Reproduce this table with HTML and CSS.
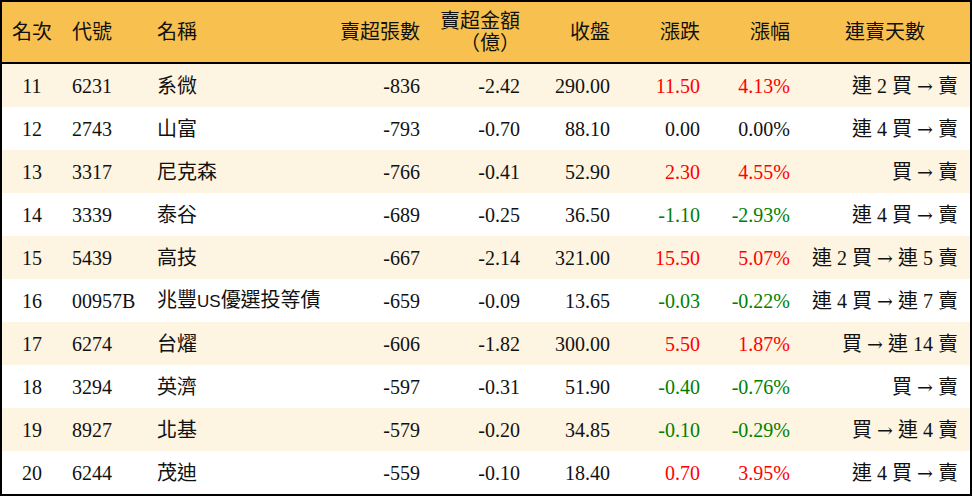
FILE: index.html
```html
<!DOCTYPE html>
<html lang="zh-Hant">
<head>
<meta charset="utf-8">
<title>賣超排行</title>
<link rel="stylesheet" href="styles.css">
</head>
<body>
<div class="board">
  <div class="row head">
    <div class="c c1">名次</div>
    <div class="c c2">代號</div>
    <div class="c c3">名稱</div>
    <div class="c num">賣超張數</div>
    <div class="c num two">賣超金額<br>（億）</div>
    <div class="c num">收盤</div>
    <div class="c num">漲跌</div>
    <div class="c num">漲幅</div>
    <div class="c c9h">連賣天數</div>
  </div>
  <div class="row odd">
    <div class="c c1">11</div><div class="c c2">6231</div><div class="c c3">系微</div>
    <div class="c num">-836</div><div class="c num">-2.42</div><div class="c num">290.00</div>
    <div class="c num up">11.50</div><div class="c num up">4.13%</div><div class="c num">連 2 買 <span class="arr">→</span> 賣</div>
  </div>
  <div class="row">
    <div class="c c1">12</div><div class="c c2">2743</div><div class="c c3">山富</div>
    <div class="c num">-793</div><div class="c num">-0.70</div><div class="c num">88.10</div>
    <div class="c num">0.00</div><div class="c num">0.00%</div><div class="c num">連 4 買 <span class="arr">→</span> 賣</div>
  </div>
  <div class="row odd">
    <div class="c c1">13</div><div class="c c2">3317</div><div class="c c3">尼克森</div>
    <div class="c num">-766</div><div class="c num">-0.41</div><div class="c num">52.90</div>
    <div class="c num up">2.30</div><div class="c num up">4.55%</div><div class="c num">買 <span class="arr">→</span> 賣</div>
  </div>
  <div class="row">
    <div class="c c1">14</div><div class="c c2">3339</div><div class="c c3">泰谷</div>
    <div class="c num">-689</div><div class="c num">-0.25</div><div class="c num">36.50</div>
    <div class="c num down">-1.10</div><div class="c num down">-2.93%</div><div class="c num">連 4 買 <span class="arr">→</span> 賣</div>
  </div>
  <div class="row odd">
    <div class="c c1">15</div><div class="c c2">5439</div><div class="c c3">高技</div>
    <div class="c num">-667</div><div class="c num">-2.14</div><div class="c num">321.00</div>
    <div class="c num up">15.50</div><div class="c num up">5.07%</div><div class="c num">連 2 買 <span class="arr">→</span> 連 5 賣</div>
  </div>
  <div class="row">
    <div class="c c1">16</div><div class="c c2">00957B</div><div class="c c3">兆豐<span class="sans">US</span>優選投等債</div>
    <div class="c num">-659</div><div class="c num">-0.09</div><div class="c num">13.65</div>
    <div class="c num down">-0.03</div><div class="c num down">-0.22%</div><div class="c num">連 4 買 <span class="arr">→</span> 連 7 賣</div>
  </div>
  <div class="row odd">
    <div class="c c1">17</div><div class="c c2">6274</div><div class="c c3">台燿</div>
    <div class="c num">-606</div><div class="c num">-1.82</div><div class="c num">300.00</div>
    <div class="c num up">5.50</div><div class="c num up">1.87%</div><div class="c num">買 <span class="arr">→</span> 連 14 賣</div>
  </div>
  <div class="row">
    <div class="c c1">18</div><div class="c c2">3294</div><div class="c c3">英濟</div>
    <div class="c num">-597</div><div class="c num">-0.31</div><div class="c num">51.90</div>
    <div class="c num down">-0.40</div><div class="c num down">-0.76%</div><div class="c num">買 <span class="arr">→</span> 賣</div>
  </div>
  <div class="row odd">
    <div class="c c1">19</div><div class="c c2">8927</div><div class="c c3">北基</div>
    <div class="c num">-579</div><div class="c num">-0.20</div><div class="c num">34.85</div>
    <div class="c num down">-0.10</div><div class="c num down">-0.29%</div><div class="c num">買 <span class="arr">→</span> 連 4 賣</div>
  </div>
  <div class="row">
    <div class="c c1">20</div><div class="c c2">6244</div><div class="c c3">茂迪</div>
    <div class="c num">-559</div><div class="c num">-0.10</div><div class="c num">18.40</div>
    <div class="c num up">0.70</div><div class="c num up">3.95%</div><div class="c num">連 4 買 <span class="arr">→</span> 賣</div>
  </div>
</div>
</body>
</html>
```
FILE: styles.css
```css
html, body {
  margin: 0;
  padding: 0;
  background: #ffffff;
}
.board {
  width: 972px;
  height: 496px;
  box-sizing: border-box;
  border: 2px solid #000000;
  font-family: "Liberation Serif", "Noto Sans CJK TC", serif;
  font-size: 20px;
  color: #111111;
  background: #ffffff;
}
.row {
  display: grid;
  grid-template-columns: 60px 85px 183px 100px 100px 90px 90px 90px 170px;
  height: 43px;
  align-items: center;
}
.row.odd {
  background: #fdf4e1;
}
.row.head {
  height: 60px;
  border-bottom: 2px solid #000000;
  background: #f8c14f;
}
.c {
  white-space: nowrap;
  line-height: 22px;
}
.c1 {
  text-align: center;
}
.c2, .c3 {
  padding-left: 10px;
}
.num {
  text-align: right;
  padding-right: 10px;
}
.row .num:last-child {
  padding-right: 12px;
}
.c9h {
  text-align: center;
}
.two {
  line-height: 22px;
}
.up {
  color: #ff0000;
}
.down {
  color: #008000;
}
.sans {
  font-family: "Liberation Sans", sans-serif;
  font-size: 17px;
}
.arr {
  font-family: "DejaVu Serif", serif;
  font-size: 19px;
}
```
